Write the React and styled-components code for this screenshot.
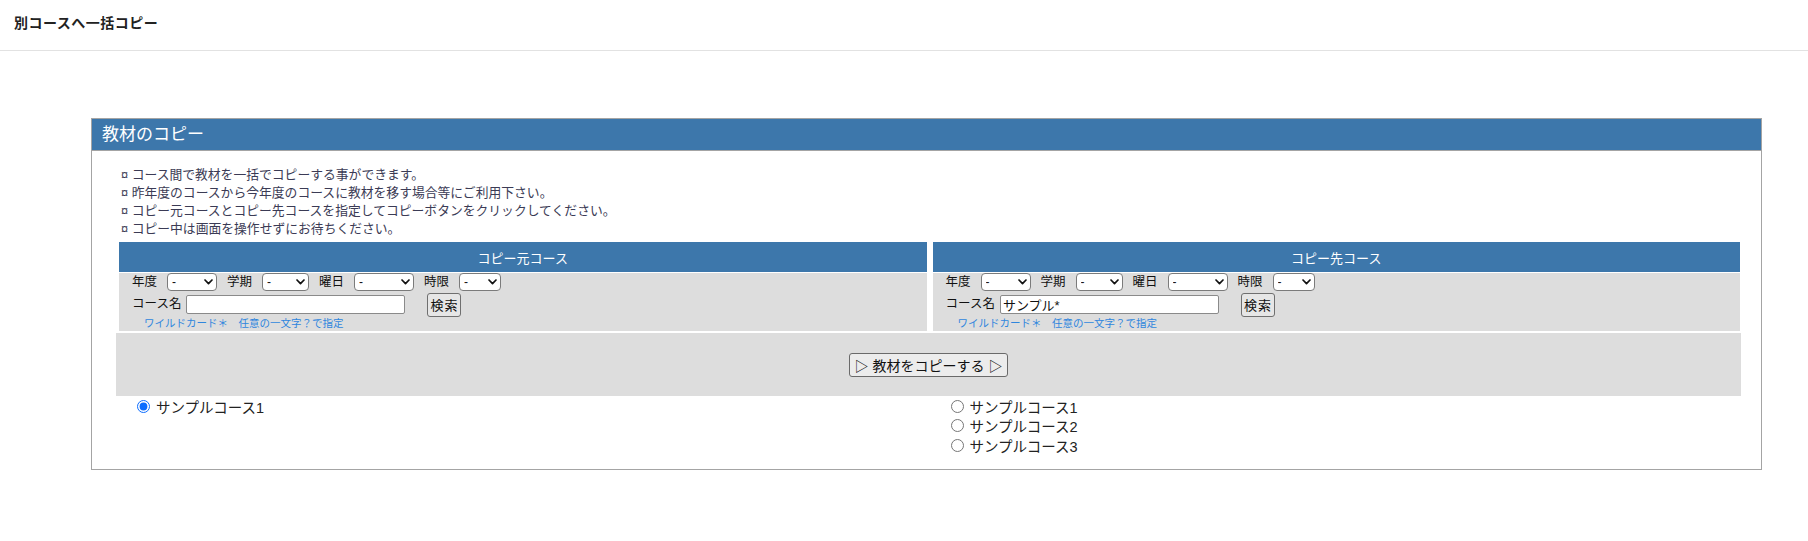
import React from 'react';
import styled, { createGlobalStyle } from 'styled-components';

const FONT = `"Liberation Sans", "Noto Sans CJK JP", sans-serif`;
const BLUE = '#3d77ab';

const Global = createGlobalStyle`
  html, body { margin: 0; padding: 0; background: #fff; }
  body {
    font-family: ${FONT};
    color: #222;
  }
  * { box-sizing: border-box; }
`;

const TopBar = styled.header`
  height: 51px;
  border-bottom: 1px solid #e2e2e2;
  padding: 13px 14px 0;
  font-size: 14px;
  font-weight: bold;
  letter-spacing: 0.5px;
  line-height: 20px;
  color: #222;
`;

const Panel = styled.section`
  margin: 67px 46px 0 91px;
  border: 1px solid #a4a4a4;
`;

const PanelTitle = styled.div`
  height: 32px;
  background: ${BLUE};
  border-bottom: 1px solid #a4a4a4;
  color: #fff;
  font-size: 17px;
  line-height: 31px;
  padding-left: 10px;
  white-space: nowrap;
`;

const PanelBody = styled.div`
  padding: 15px 20px 13.5px 24px;
`;

const Notes = styled.ul`
  list-style: none;
  margin: 0 0 4px;
  padding: 0 0 0 5px;
  font-size: 12.8px;
  line-height: 18px;
  color: #3b3b55;
`;

const Note = styled.li``;

const CourseGrid = styled.div`
  display: grid;
  grid-template-columns: 1fr 1fr;
  column-gap: 6px;
  padding: 0 1px 0 3px;
`;

const CourseTable = styled.div``;

const CourseHead = styled.div`
  height: 30px;
  margin-bottom: 1px;
  background: ${BLUE};
  color: #fff;
  font-size: 13px;
  display: flex;
  align-items: center;
  justify-content: center;
`;

const CourseBody = styled.div`
  height: 58px;
  background: #dddddd;
  padding: 0 0 1px 13px;
  display: flex;
  flex-direction: column;
`;

const FieldRow = styled.div`
  display: flex;
  align-items: center;
  height: ${(p) => p.$h}px;
  gap: ${(p) => p.$gap}px;
`;

const Label = styled.span`
  font-size: 12.5px;
  line-height: 1;
  color: #111;
  white-space: nowrap;
`;

const SelectWrap = styled.span`
  position: relative;
  display: inline-flex;
  width: ${(p) => p.$w}px;
  height: 18px;
  align-self: flex-start;
`;

const SelectBox = styled.select`
  appearance: none;
  -webkit-appearance: none;
  width: 100%;
  height: 100%;
  margin: 0;
  border: 1px solid #7b7b7b;
  border-radius: 4px;
  background: #fff;
  font: 12px ${FONT};
  color: #111;
  padding: 0 14px 0 4px;
  line-height: 16px;
`;

const Chevron = styled.svg`
  position: absolute;
  right: 4px;
  top: 50%;
  transform: translateY(-50%);
  pointer-events: none;
`;

const TextInput = styled.input`
  width: 219px;
  height: 19px;
  margin: 0;
  border: 1px solid #8a8a8a;
  border-radius: 2px;
  background: #fff;
  font: 13px ${FONT};
  color: #111;
  padding: 0 2px;
`;

const SearchButton = styled.button`
  width: 34px;
  height: 24px;
  margin: 0 0 0 17px;
  padding: 0;
  border: 1px solid #6f6f6f;
  border-radius: 3px;
  background: #e6e6e6;
  font: 13px ${FONT};
  letter-spacing: 1px;
  color: #111;
`;

const Hint = styled.div`
  height: 13px;
  line-height: 13px;
  margin-left: 12px;
  font-size: 10.5px;
  color: #2f86dd;
  white-space: nowrap;
`;

const ActionRow = styled.div`
  height: 63px;
  margin-top: 2px;
  background: #dddddd;
  display: flex;
  align-items: center;
  justify-content: center;
`;

const CopyButton = styled.button`
  height: 24px;
  margin: 0;
  padding: 0 4.5px;
  border: 1px solid #6a6a6a;
  border-radius: 3px;
  background: #ececec;
  font: 14px ${FONT};
  color: #111;
`;

const RadioList = styled.div`
  display: flex;
  flex-direction: column;
  padding: 0.5px 0 0 18px;
`;

const RadioRow = styled.label`
  display: flex;
  align-items: center;
  gap: 6px;
  height: 19.5px;
  font-size: 14.5px;
  color: #222;
`;

const Radio = styled.input`
  width: 13px;
  height: 13px;
  margin: 0;
  accent-color: #0a6cff;
`;

function Select({ w }) {
  return (
    <SelectWrap $w={w}>
      <SelectBox defaultValue="-">
        <option value="-">-</option>
      </SelectBox>
      <Chevron width="9" height="6" viewBox="0 0 9 6">
        <path d="M1 1 L4.5 4.6 L8 1" fill="none" stroke="#111" strokeWidth="1.7" strokeLinecap="round" strokeLinejoin="round" />
      </Chevron>
    </SelectWrap>
  );
}

function Course({ title, value }) {
  return (
    <CourseTable>
      <CourseHead>{title}</CourseHead>
      <CourseBody>
        <FieldRow $h={19} $gap={10}>
          <Label>年度</Label>
          <Select w={50} />
          <Label>学期</Label>
          <Select w={47} />
          <Label>曜日</Label>
          <Select w={60} />
          <Label>時限</Label>
          <Select w={42} />
        </FieldRow>
        <FieldRow $h={25} $gap={5}>
          <Label>コース名</Label>
          <TextInput defaultValue={value} />
          <SearchButton>検索</SearchButton>
        </FieldRow>
        <Hint>ワイルドカード＊　任意の一文字？で指定</Hint>
      </CourseBody>
    </CourseTable>
  );
}

export default function App() {
  return (
    <>
      <Global />
      <TopBar>別コースへ一括コピー</TopBar>
      <Panel>
        <PanelTitle>教材のコピー</PanelTitle>
        <PanelBody>
          <Notes>
            <Note>¤ コース間で教材を一括でコピーする事ができます。</Note>
            <Note>¤ 昨年度のコースから今年度のコースに教材を移す場合等にご利用下さい。</Note>
            <Note>¤ コピー元コースとコピー先コースを指定してコピーボタンをクリックしてください。</Note>
            <Note>¤ コピー中は画面を操作せずにお待ちください。</Note>
          </Notes>
          <CourseGrid>
            <Course title="コピー元コース" value="" />
            <Course title="コピー先コース" value="サンプル*" />
          </CourseGrid>
          <ActionRow>
            <CopyButton>▷ 教材をコピーする ▷</CopyButton>
          </ActionRow>
          <CourseGrid>
            <RadioList>
              <RadioRow>
                <Radio type="radio" name="src" defaultChecked />
                サンプルコース1
              </RadioRow>
            </RadioList>
            <RadioList>
              <RadioRow>
                <Radio type="radio" name="dst" />
                サンプルコース1
              </RadioRow>
              <RadioRow>
                <Radio type="radio" name="dst" />
                サンプルコース2
              </RadioRow>
              <RadioRow>
                <Radio type="radio" name="dst" />
                サンプルコース3
              </RadioRow>
            </RadioList>
          </CourseGrid>
        </PanelBody>
      </Panel>
    </>
  );
}
